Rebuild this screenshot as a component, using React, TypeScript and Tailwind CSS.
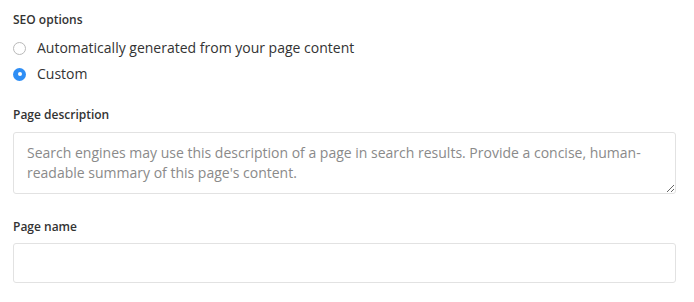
import React from 'react';

const font = { fontFamily: '"Open Sans", "Noto Sans", Arial, sans-serif' };

interface RadioProps {
  checked?: boolean;
  label: string;
}

const Radio: React.FC<RadioProps> = ({ checked, label }) => (
  <label className="flex items-center h-[20px] gap-[11px]">
    {checked ? (
      <span className="w-[13px] h-[13px] rounded-full bg-[#2e8ef5] flex items-center justify-center">
        <span className="w-[4px] h-[4px] rounded-full bg-white" />
      </span>
    ) : (
      <span className="w-[13px] h-[13px] rounded-full border border-[#b9b9b9] bg-white" />
    )}
    <span className="text-[14px] leading-[20px] text-[#333]">{label}</span>
  </label>
);

export default function App() {
  return (
    <div className="w-[694px] h-[302px] bg-white pl-[13px] pr-[18px] pt-[11px] font-['Open_Sans',sans-serif]" style={font}>
      <div className="text-[12px] leading-[18px] font-semibold text-[#333]">SEO options</div>
      <div className="mt-[9px] flex flex-col gap-[6px]">
        <Radio label="Automatically generated from your page content" />
        <Radio checked label="Custom" />
      </div>

      <div className="mt-[22px] text-[12px] leading-[18px] font-semibold text-[#333]">Page description</div>
      <textarea
        className="mt-[8px] block w-full h-[62px] border border-[#e2e2e2] rounded-[3px] pt-[10px] px-[13px] text-[14px] leading-[20px] text-[#333] placeholder:text-[#8a8a8a] outline-none"
        placeholder="Search engines may use this description of a page in search results. Provide a concise, human-readable summary of this page's content."
      />

      <div className="mt-[24px] text-[12px] leading-[18px] font-semibold text-[#333]">Page name</div>
      <input
        className="mt-[7px] block w-full h-[40px] border border-[#e2e2e2] rounded-[3px] px-[13px] text-[14px] text-[#333] outline-none"
      />
    </div>
  );
}
